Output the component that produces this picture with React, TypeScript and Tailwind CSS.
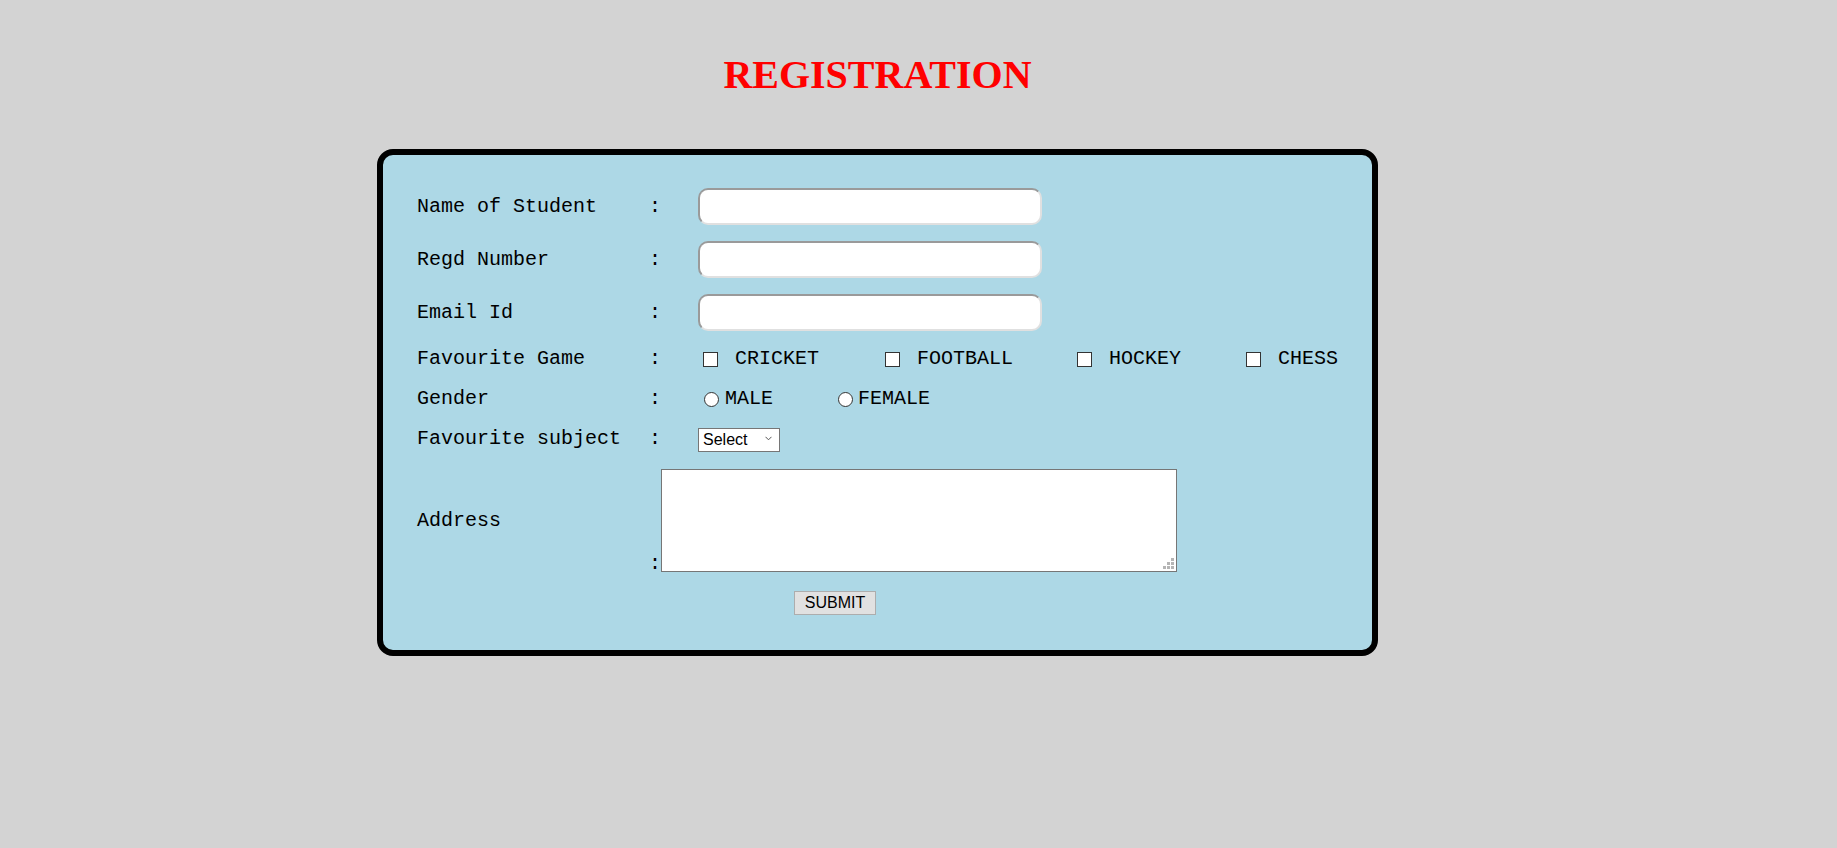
import React from 'react';

const mono = 'font-["Liberation_Mono","DejaVu_Sans_Mono",monospace] text-[20px] text-black';
const sans = 'font-["Liberation_Sans",Arial,sans-serif] text-[16px] text-black';

const games = [
  { name: 'CRICKET', width: 'w-[182px]' },
  { name: 'FOOTBALL', width: 'w-[192px]' },
  { name: 'HOCKEY', width: 'w-[169px]' },
  { name: 'CHESS', width: 'w-[120px]' }
];

const Label: React.FC<{ text: string }> = ({ text }) => (
  <div className={`w-[232px] shrink-0 whitespace-pre ${mono}`}>{text}</div>
);

const Colon: React.FC = () => (
  <div className={`w-[49px] shrink-0 pl-[0px] ${mono}`}>:</div>
);

const TextInput: React.FC = () => (
  <input
    type="text"
    className="w-[344px] h-[37px] bg-white rounded-[10px] border-2 border-t-[#9a9a9a] border-l-[#9a9a9a] border-b-[#e0e0e0] border-r-[#e0e0e0] outline-none px-2"
  />
);

const Row: React.FC<{ label: string; className?: string; children: React.ReactNode }> = ({ label, className = '', children }) => (
  <div className={`flex items-center ${className}`}>
    <Label text={label} />
    <Colon />
    {children}
  </div>
);

export default function App() {
  return (
    <div className="min-h-[848px] bg-[#d3d3d3] pt-[52px]">
      <div className="ml-[377px] w-[1001px]">
        <h1 className='text-center font-["Liberation_Serif","Times_New_Roman",serif] font-bold text-[40px] leading-[46px] text-[#ff0000]'>
          REGISTRATION
        </h1>

        <form
          className="mt-[51px] w-[1001px] bg-[#add8e6] border-[6px] border-black rounded-[16px] pt-[33px] pb-[35px] pl-[34px]"
          onSubmit={(e) => e.preventDefault()}
        >
          <Row label="Name of Student" className="h-[37px]">
            <TextInput />
          </Row>
          <Row label="Regd Number" className="h-[37px] mt-[16px]">
            <TextInput />
          </Row>
          <Row label="Email Id" className="h-[37px] mt-[16px]">
            <TextInput />
          </Row>

          {/* Favourite Game */}
          <Row label="Favourite Game" className="h-[24px] mt-[16px]">
            <div className="flex items-center">
              {games.map((g) => (
                <label key={g.name} className={`flex items-center ${g.width}`}>
                  <input
                    type="checkbox"
                    className="appearance-none ml-[5px] w-[15px] h-[15px] bg-white border border-[#333333] shrink-0"
                  />
                  <span className={`ml-[17px] ${mono}`}>{g.name}</span>
                </label>
              ))}
            </div>
          </Row>

          {/* Gender */}
          <Row label="Gender" className="h-[24px] mt-[16px]">
            <div className="flex items-center">
              <label className="flex items-center w-[134px]">
                <input
                  type="radio"
                  name="gender"
                  className="appearance-none ml-[6px] w-[15px] h-[15px] rounded-full bg-white border border-[#333333] shrink-0"
                />
                <span className={`ml-[6px] ${mono}`}>MALE</span>
              </label>
              <label className="flex items-center">
                <input
                  type="radio"
                  name="gender"
                  className="appearance-none ml-[6px] w-[15px] h-[15px] rounded-full bg-white border border-[#333333] shrink-0"
                />
                <span className={`ml-[5px] ${mono}`}>FEMALE</span>
              </label>
            </div>
          </Row>

          {/* Favourite subject */}
          <Row label="Favourite subject" className="h-[24px] mt-[16px]">
            <div className="relative w-[82px] h-[24px]">
              <select
                className={`appearance-none w-[82px] h-[24px] bg-white border border-[#767676] pl-[4px] leading-[22px] outline-none ${sans}`}
                defaultValue="select"
              >
                <option value="select">Select</option>
                <option value="maths">Maths</option>
                <option value="physics">Physics</option>
                <option value="chemistry">Chemistry</option>
              </select>
              <svg className="absolute right-[8px] top-[9px] pointer-events-none" width="7" height="5" viewBox="0 0 7 5">
                <path d="M0.5 0.8 L3.5 3.8 L6.5 0.8" fill="none" stroke="#555" strokeWidth="1" />
              </svg>
            </div>
          </Row>

          {/* Address */}
          <div className="flex items-center h-[103px] mt-[18px]">
            <Label text="Address" />
            <div className="flex items-end h-[103px]">
              <span className={`w-[12px] leading-[20px] mb-[-2px] ${mono}`}>:</span>
              <div className="relative">
                <textarea className="block w-[516px] h-[103px] bg-white border border-[#767676] resize-none outline-none" />
                <svg className="absolute right-[3px] bottom-[3px] pointer-events-none" width="11" height="11" viewBox="0 0 11 11">
                  <rect x="8" y="0" width="3" height="3" fill="#b5b5b5" />
                  <rect x="4" y="4" width="3" height="3" fill="#b5b5b5" />
                  <rect x="8" y="4" width="3" height="3" fill="#b5b5b5" />
                  <rect x="0" y="8" width="3" height="3" fill="#b5b5b5" />
                  <rect x="4" y="8" width="3" height="3" fill="#b5b5b5" />
                  <rect x="8" y="8" width="3" height="3" fill="#b5b5b5" />
                </svg>
              </div>
            </div>
          </div>

          {/* Submit */}
          <div className="flex mt-[19px] pl-[377px]">
            <button
              type="submit"
              className={`w-[82px] h-[24px] bg-[#e1e1e1] border border-[#adadad] leading-[22px] text-center ${sans}`}
            >
              SUBMIT
            </button>
          </div>
        </form>
      </div>
    </div>
  );
}
